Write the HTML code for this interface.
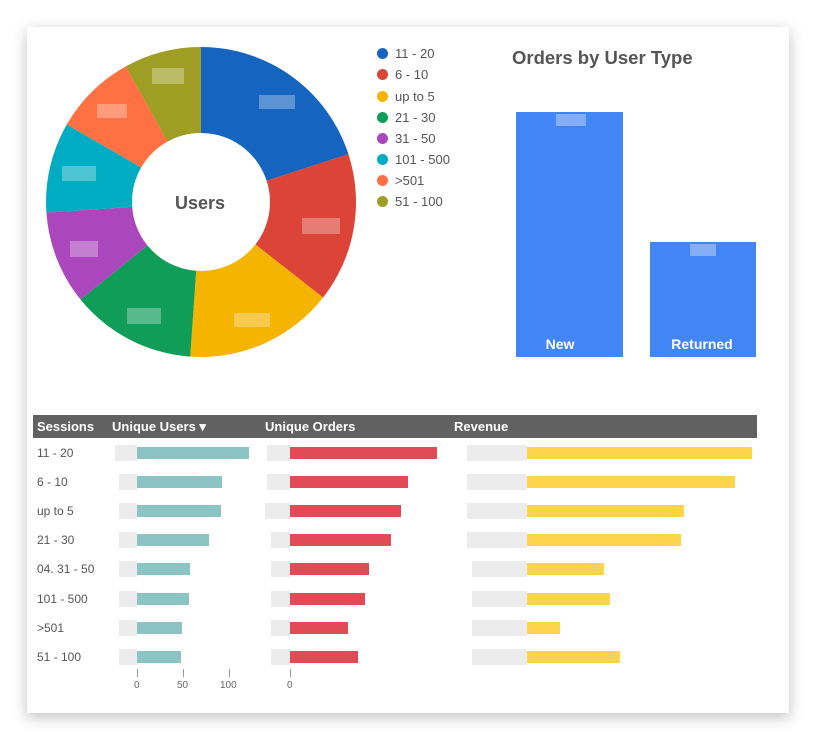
<!DOCTYPE html>
<html><head><style>
body{margin:0;width:815px;height:741px;background:#fff;font-family:"Liberation Sans",sans-serif;position:relative;overflow:hidden}
.card{position:absolute;left:27px;top:27px;width:762px;height:686px;background:#fff;box-shadow:0 4px 14px rgba(0,0,0,.25)}
.a{position:absolute}
.lg{position:absolute;left:377px;font-size:13px;color:#555;line-height:14px}
.lg i{display:inline-block;width:11px;height:11px;border-radius:50%;vertical-align:-1px;margin-right:7px}
.hd{position:absolute;left:33px;top:415px;width:724px;height:23px;background:#616161;color:#fff;font-weight:bold;font-size:13px}
.hd span{position:absolute;top:4px}
.rl{position:absolute;left:37px;font-size:12px;color:#555}
.bar{position:absolute;height:12px}
.g{position:absolute;height:16px;background:#ececec}
.ax{position:absolute;font-size:10px;color:#666}
.bl{position:absolute;width:34px;height:12px;background:rgba(255,255,255,.3)}
</style></head><body>
<div class="card"></div>
<svg class="a" style="left:0;top:0" width="815" height="400">
<path d="M201,47 A155,155 0 0 1 348.4,154.1 L266.6,180.7 A69,69 0 0 0 201,133Z" fill="#1565c0"/>
<path d="M348.4,154.1 A155,155 0 0 1 323.1,297.5 L255.4,244.5 A69,69 0 0 0 266.6,180.7Z" fill="#db4437"/>
<path d="M323.1,297.5 A155,155 0 0 1 190.2,356.6 L196.2,270.8 A69,69 0 0 0 255.4,244.5Z" fill="#f4b400"/>
<path d="M190.2,356.6 A155,155 0 0 1 80.5,299.5 L147.4,245.4 A69,69 0 0 0 196.2,270.8Z" fill="#0f9d58"/>
<path d="M80.5,299.5 A155,155 0 0 1 46.4,212.8 L132.2,206.8 A69,69 0 0 0 147.4,245.4Z" fill="#ab47bc"/>
<path d="M46.4,212.8 A155,155 0 0 1 66.8,124.5 L141.2,167.5 A69,69 0 0 0 132.2,206.8Z" fill="#00acc1"/>
<path d="M66.8,124.5 A155,155 0 0 1 125.8,66.4 L167.5,141.6 A69,69 0 0 0 141.2,167.5Z" fill="#ff7043"/>
<path d="M125.8,66.4 A155,155 0 0 1 201,47 L201,133 A69,69 0 0 0 167.5,141.6Z" fill="#9e9d24"/>
<g fill="#fff" opacity=".3">
<rect x="259" y="95" width="36" height="14"/><rect x="302" y="218" width="38" height="16"/><rect x="234" y="313" width="36" height="14"/>
<rect x="127" y="308" width="34" height="16"/><rect x="70" y="241" width="28" height="16"/><rect x="62" y="166" width="34" height="15"/>
<rect x="97" y="104" width="30" height="14"/><rect x="152" y="68" width="32" height="16"/>
<rect x="556" y="114" width="30" height="12"/><rect x="690" y="244" width="26" height="12"/>
</g>
<text x="200" y="209" text-anchor="middle" font-family="Liberation Sans" font-weight="bold" font-size="18" fill="#555">Users</text>
<rect x="516" y="112" width="107" height="245" fill="#4285f4"/>
<rect x="650" y="242" width="106" height="115" fill="#4285f4"/>
<g fill="#fff" opacity=".35"><rect x="556" y="114" width="30" height="12"/><rect x="690" y="244" width="26" height="12"/></g>
<text x="560" y="349" text-anchor="middle" font-family="Liberation Sans" font-weight="bold" font-size="14" fill="#fff">New</text>
<text x="702" y="349" text-anchor="middle" font-family="Liberation Sans" font-weight="bold" font-size="14" fill="#fff">Returned</text>
<text x="512" y="64" font-family="Liberation Sans" font-weight="bold" font-size="18.5" fill="#555">Orders by User Type</text>
</svg>
<div class="lg" style="top:47px"><i style="background:#1565c0"></i>11 - 20</div>
<div class="lg" style="top:68px"><i style="background:#db4437"></i>6 - 10</div>
<div class="lg" style="top:90px"><i style="background:#f4b400"></i>up to 5</div>
<div class="lg" style="top:111px"><i style="background:#0f9d58"></i>21 - 30</div>
<div class="lg" style="top:132px"><i style="background:#ab47bc"></i>31 - 50</div>
<div class="lg" style="top:153px"><i style="background:#00acc1"></i>101 - 500</div>
<div class="lg" style="top:174px"><i style="background:#ff7043"></i>&gt;501</div>
<div class="lg" style="top:195px"><i style="background:#9e9d24"></i>51 - 100</div>
<div class="hd"><span style="left:4px">Sessions</span><span style="left:79px">Unique Users ▾</span><span style="left:232px">Unique Orders</span><span style="left:421px">Revenue</span></div>

<div class="rl" style="top:446px">11 - 20</div>
<div class="rl" style="top:475px">6 - 10</div>
<div class="rl" style="top:504px">up to 5</div>
<div class="rl" style="top:533px">21 - 30</div>
<div class="rl" style="top:562px">04. 31 - 50</div>
<div class="rl" style="top:592px">101 - 500</div>
<div class="rl" style="top:621px">&gt;501</div>
<div class="rl" style="top:650px">51 - 100</div>

<div class="g" style="left:115px;top:445px;width:22px"></div><div class="bar" style="left:137px;top:447px;width:112px;background:#8cc3c3"></div>
<div class="g" style="left:119px;top:474px;width:18px"></div><div class="bar" style="left:137px;top:476px;width:85px;background:#8cc3c3"></div>
<div class="g" style="left:119px;top:503px;width:18px"></div><div class="bar" style="left:137px;top:505px;width:84px;background:#8cc3c3"></div>
<div class="g" style="left:119px;top:532px;width:18px"></div><div class="bar" style="left:137px;top:534px;width:72px;background:#8cc3c3"></div>
<div class="g" style="left:119px;top:561px;width:18px"></div><div class="bar" style="left:137px;top:563px;width:53px;background:#8cc3c3"></div>
<div class="g" style="left:119px;top:591px;width:18px"></div><div class="bar" style="left:137px;top:593px;width:52px;background:#8cc3c3"></div>
<div class="g" style="left:119px;top:620px;width:18px"></div><div class="bar" style="left:137px;top:622px;width:45px;background:#8cc3c3"></div>
<div class="g" style="left:119px;top:649px;width:18px"></div><div class="bar" style="left:137px;top:651px;width:44px;background:#8cc3c3"></div>

<div class="g" style="left:267px;top:445px;width:23px"></div><div class="bar" style="left:290px;top:447px;width:147px;background:#e04b55"></div>
<div class="g" style="left:267px;top:474px;width:23px"></div><div class="bar" style="left:290px;top:476px;width:118px;background:#e04b55"></div>
<div class="g" style="left:265px;top:503px;width:25px"></div><div class="bar" style="left:290px;top:505px;width:111px;background:#e04b55"></div>
<div class="g" style="left:271px;top:532px;width:19px"></div><div class="bar" style="left:290px;top:534px;width:101px;background:#e04b55"></div>
<div class="g" style="left:271px;top:561px;width:19px"></div><div class="bar" style="left:290px;top:563px;width:79px;background:#e04b55"></div>
<div class="g" style="left:271px;top:591px;width:19px"></div><div class="bar" style="left:290px;top:593px;width:75px;background:#e04b55"></div>
<div class="g" style="left:271px;top:620px;width:19px"></div><div class="bar" style="left:290px;top:622px;width:58px;background:#e04b55"></div>
<div class="g" style="left:271px;top:649px;width:19px"></div><div class="bar" style="left:290px;top:651px;width:68px;background:#e04b55"></div>

<div class="g" style="left:467px;top:445px;width:60px"></div><div class="bar" style="left:527px;top:447px;width:225px;background:#fcd54c"></div>
<div class="g" style="left:467px;top:474px;width:60px"></div><div class="bar" style="left:527px;top:476px;width:208px;background:#fcd54c"></div>
<div class="g" style="left:467px;top:503px;width:60px"></div><div class="bar" style="left:527px;top:505px;width:157px;background:#fcd54c"></div>
<div class="g" style="left:467px;top:532px;width:60px"></div><div class="bar" style="left:527px;top:534px;width:154px;background:#fcd54c"></div>
<div class="g" style="left:472px;top:561px;width:55px"></div><div class="bar" style="left:527px;top:563px;width:77px;background:#fcd54c"></div>
<div class="g" style="left:472px;top:591px;width:55px"></div><div class="bar" style="left:527px;top:593px;width:83px;background:#fcd54c"></div>
<div class="g" style="left:472px;top:620px;width:55px"></div><div class="bar" style="left:527px;top:622px;width:33px;background:#fcd54c"></div>
<div class="g" style="left:472px;top:649px;width:55px"></div><div class="bar" style="left:527px;top:651px;width:93px;background:#fcd54c"></div>

<div class="a" style="left:137px;top:669px;width:1px;height:8px;background:#999"></div>
<div class="a" style="left:183px;top:669px;width:1px;height:8px;background:#999"></div>
<div class="a" style="left:229px;top:669px;width:1px;height:8px;background:#999"></div>
<div class="a" style="left:290px;top:669px;width:1px;height:8px;background:#999"></div>
<div class="ax" style="left:134px;top:680px">0</div>
<div class="ax" style="left:177px;top:680px">50</div>
<div class="ax" style="left:220px;top:680px">100</div>
<div class="ax" style="left:287px;top:680px">0</div>
</body></html>
